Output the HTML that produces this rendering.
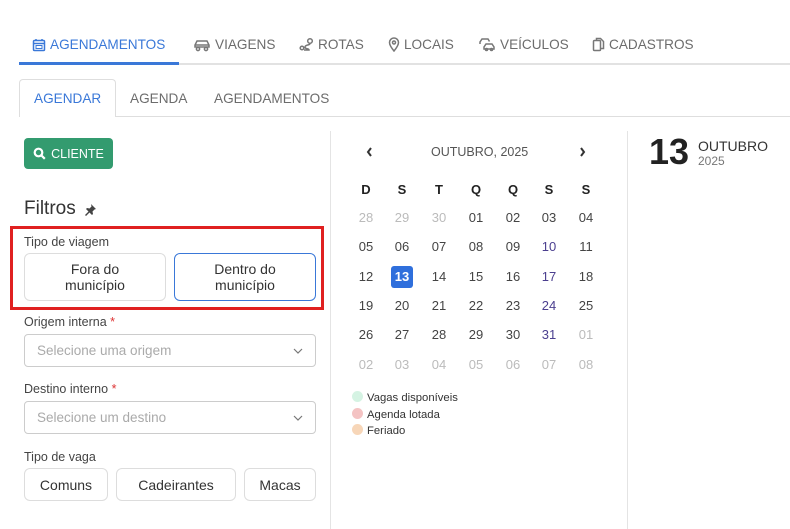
<!DOCTYPE html>
<html><head><meta charset="utf-8"><style>
*{margin:0;padding:0;box-sizing:border-box}
body{width:790px;height:529px;background:#fff;font-family:"Liberation Sans",sans-serif;color:#333;position:relative;overflow:hidden}
.a{position:absolute}
.nav{font-size:13.6px;color:#6c6c6c;top:37px;display:flex;align-items:center;gap:4px;white-space:nowrap}
.nav svg{stroke:#777;fill:none;stroke-width:1.5}
.tab{font-size:13.6px;color:#6c6c6c;top:91px}
.lbl{font-size:12.5px;color:#444}
.btn{border:1px solid #ddd;border-radius:6px;background:#fff;display:flex;align-items:center;justify-content:center;text-align:center;font-size:14px;color:#333;line-height:16px}
.sel{border:1px solid #ccc;border-radius:4px;height:33px;left:24px;width:292px;font-size:13.5px;color:#aaa;padding:8px 12px}
.sel svg{position:absolute;right:12px;top:13px}
.cal div{position:absolute;width:30px;text-align:center;font-size:13px;color:#444;transform:translateX(-15px)}
.cal .h{font-weight:bold;font-size:13px;color:#222}
.cal .m{color:#bbb}
.cal .f{color:#4b3f8f}
.dot{width:11px;height:11px;border-radius:50%;display:inline-block;vertical-align:-1px;margin-right:4px}
.leg{font-size:11.3px;color:#333;left:352px}
</style></head><body>
<div class="a" style="left:19px;top:63px;width:771px;height:2px;background:#e2e2e2"></div>
<div class="a" style="left:19px;top:62px;width:160px;height:3px;background:#3a78d8"></div>
<div class="a nav" style="left:32px;color:#3a78d8"><svg width="14" height="14" viewBox="0 0 14 14" style="stroke:#3a78d8"><rect x="1.5" y="2.5" width="11" height="10" rx="1"/><line x1="1.5" y1="5.5" x2="12.5" y2="5.5"/><line x1="4" y1="1" x2="4" y2="3"/><line x1="10" y1="1" x2="10" y2="3"/><rect x="4" y="7.5" width="6" height="3" stroke-width="1"/></svg>AGENDAMENTOS</div>
<div class="a nav" style="left:193px"><svg width="18" height="14" viewBox="0 0 18 14"><path d="M2 9V7l2-4h10l2 4v2H2z"/><circle cx="5" cy="11" r="1.6"/><circle cx="13" cy="11" r="1.6"/><line x1="2" y1="7" x2="16" y2="7"/></svg>VIAGENS</div>
<div class="a nav" style="left:299px"><svg width="15" height="15" viewBox="0 0 15 15"><circle cx="11" cy="4" r="2.3"/><circle cx="3" cy="11" r="1.8"/><path d="M11 6.5c0 2-5 1-5 3.5s4 1 4 3H5"/></svg>ROTAS</div>
<div class="a nav" style="left:388px"><svg width="12" height="15" viewBox="0 0 12 15"><path d="M6 14S1.5 8.5 1.5 5.5a4.5 4.5 0 0 1 9 0C10.5 8.5 6 14 6 14z"/><circle cx="6" cy="5.5" r="1.5"/></svg>LOCAIS</div>
<div class="a nav" style="left:478px"><svg width="18" height="15" viewBox="0 0 18 15"><path d="M2 7V5l2-3h6l1.5 2.5"/><path d="M6 12v-2l2-3h6l2 3v2H6z"/><circle cx="8.5" cy="12.5" r="1"/><circle cx="13.5" cy="12.5" r="1"/></svg>VEÍCULOS</div>
<div class="a nav" style="left:592px"><svg width="13" height="15" viewBox="0 0 13 15"><rect x="1.5" y="3.5" width="7" height="10" rx="1"/><path d="M4.5 3.5V1.5h4l3 3v7h-3"/></svg>CADASTROS</div>
<div class="a" style="left:19px;top:116px;width:771px;height:1px;background:#dedede"></div>
<div class="a" style="left:19px;top:79px;width:97px;height:38px;border:1px solid #dedede;border-bottom:none;border-radius:4px 4px 0 0;background:#fff"></div>
<div class="a tab" style="left:34px;color:#3a78d8">AGENDAR</div>
<div class="a tab" style="left:130px">AGENDA</div>
<div class="a tab" style="left:214px">AGENDAMENTOS</div>
<div class="a" style="left:330px;top:131px;width:1px;height:398px;background:#e4e4e4"></div>
<div class="a" style="left:627px;top:131px;width:1px;height:398px;background:#e4e4e4"></div>
<div class="a" style="left:24px;top:138px;width:89px;height:31px;background:#339b6f;border-radius:4px;color:#fff;font-size:12.5px;display:flex;align-items:center;justify-content:center;gap:5px"><svg width="13" height="13" viewBox="0 0 13 13" fill="none" stroke="#fff" stroke-width="2.2"><circle cx="5.5" cy="5.5" r="3.8"/><line x1="8.3" y1="8.3" x2="11.8" y2="11.8"/></svg>CLIENTE</div>
<div class="a" style="left:24px;top:198px;font-size:19px;color:#333">Filtros</div>
<svg class="a" style="left:84px;top:203px" width="13" height="13" viewBox="0 0 13 13" fill="#444"><path d="M7 1l5 5-1.5 0.5-2 2 0.5 2.5-1 1-2.5-2.5-3.5 3.5-1-1 3.5-3.5-2.5-2.5 1-1 2.5 0.5 2-2z"/></svg>
<div class="a" style="left:10px;top:226px;width:314px;height:84px;border:3px solid #e02020"></div>
<div class="a lbl" style="left:24px;top:235px">Tipo de viagem</div>
<div class="a btn" style="left:24px;top:253px;width:142px;height:48px">Fora do<br>município</div>
<div class="a btn" style="left:174px;top:253px;width:142px;height:48px;border-color:#3a78d8">Dentro do<br>município</div>
<div class="a lbl" style="left:24px;top:315px">Origem interna <span style="color:#d33">*</span></div>
<div class="a sel" style="top:334px">Selecione uma origem<svg width="10" height="6" viewBox="0 0 10 6" fill="none" stroke="#777" stroke-width="1.2"><path d="M1 1l4 4 4-4"/></svg></div>
<div class="a lbl" style="left:24px;top:382px">Destino interno <span style="color:#d33">*</span></div>
<div class="a sel" style="top:401px">Selecione um destino<svg width="10" height="6" viewBox="0 0 10 6" fill="none" stroke="#777" stroke-width="1.2"><path d="M1 1l4 4 4-4"/></svg></div>
<div class="a lbl" style="left:24px;top:450px">Tipo de vaga</div>
<div class="a btn" style="left:24px;top:468px;width:84px;height:33px">Comuns</div>
<div class="a btn" style="left:116px;top:468px;width:120px;height:33px">Cadeirantes</div>
<div class="a btn" style="left:244px;top:468px;width:72px;height:33px">Macas</div>
<svg class="a" style="left:366px;top:147px" width="7" height="10" viewBox="0 0 7 10" fill="none" stroke="#333" stroke-width="2"><path d="M5 1L2 5l3 4"/></svg>
<svg class="a" style="left:579px;top:147px" width="7" height="10" viewBox="0 0 7 10" fill="none" stroke="#333" stroke-width="2"><path d="M2 1l3 4-3 4"/></svg>
<div class="a" style="left:431px;top:145px;font-size:12.5px;color:#555">OUTUBRO, 2025</div>
<div class="a" style="left:391px;top:266px;width:22px;height:22px;background:#2f6fdc;border-radius:3px"></div>
<div class="cal" id="cal"></div>
<div class="a leg" style="top:391px"><span class="dot" style="background:#d5f3e3"></span>Vagas disponíveis</div>
<div class="a leg" style="top:408px"><span class="dot" style="background:#f4c3c3"></span>Agenda lotada</div>
<div class="a leg" style="top:424px"><span class="dot" style="background:#f7d6b8"></span>Feriado</div>
<div class="a" style="left:649px;top:131px;font-size:36px;font-weight:bold;color:#222">13</div>
<div class="a" style="left:698px;top:138px;font-size:14px;color:#333">OUTUBRO</div>
<div class="a" style="left:698px;top:154px;font-size:12px;color:#777">2025</div>
<script>
var xs=[366,402,439,476,513,549,586],ys=[182,210,239,269,298,327,357];
var h=["D","S","T","Q","Q","S","S"];
var d=[["28","29","30","01","02","03","04"],["05","06","07","08","09","10","11"],["12","13","14","15","16","17","18"],["19","20","21","22","23","24","25"],["26","27","28","29","30","31","01"],["02","03","04","05","06","07","08"]];
var c=document.getElementById('cal'),s='';
for(var i=0;i<7;i++)s+='<div class="h" style="left:'+xs[i]+'px;top:'+ys[0]+'px">'+h[i]+'</div>';
for(var r=0;r<6;r++)for(i=0;i<7;i++){var cl='';if((r==0&&i<3)||(r==4&&i==6)||r==5)cl='m';else if(i==5&&r>0)cl='f';var st='';if(r==2&&i==1)st='color:#fff;font-weight:bold;';s+='<div class="'+cl+'" style="'+st+'left:'+xs[i]+'px;top:'+ys[r+1]+'px">'+d[r][i]+'</div>';}
c.innerHTML=s;
</script>
</body></html>
